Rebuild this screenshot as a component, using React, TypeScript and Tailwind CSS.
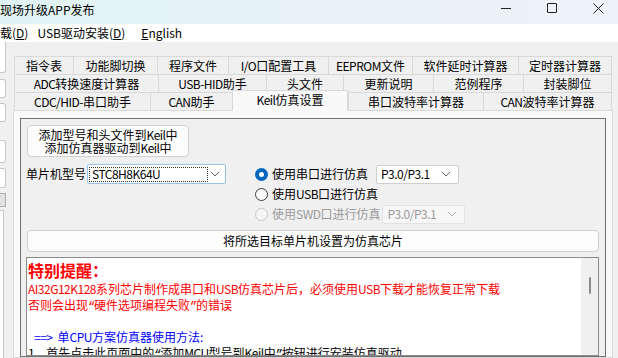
import React from 'react';

type Tab = { label: string; w: string; active?: boolean };

const tabRows: Tab[][] = [
  [
    { label: '指令表', w: 'w-[59px]' },
    { label: '功能脚切换', w: 'w-[84px]' },
    { label: '程序文件', w: 'w-[71px]' },
    { label: 'I/O口配置工具', w: 'w-[100px]' },
    { label: 'EEPROM文件', w: 'w-[84px]' },
    { label: '软件延时计算器', w: 'w-[106px]' },
    { label: '定时器计算器', w: 'w-[94px]' },
  ],
  [
    { label: 'ADC转换速度计算器', w: 'w-[144px]' },
    { label: 'USB-HID助手', w: 'w-[108px]' },
    { label: '头文件', w: 'w-[77px]' },
    { label: '更新说明', w: 'w-[90px]' },
    { label: '范例程序', w: 'w-[90px]' },
    { label: '封装脚位', w: 'w-[89px]' },
  ],
  [
    { label: 'CDC/HID-串口助手', w: 'w-[136px]' },
    { label: 'CAN助手', w: 'w-[82px]' },
    { label: 'Keil仿真设置', w: 'w-[116px]', active: true },
    { label: '串口波特率计算器', w: 'w-[135px]' },
    { label: 'CAN波特率计算器', w: 'w-[129px]' },
  ],
];

// the dialog font has half-width latin and narrow curly quotes; tighten those runs
function T({ s }: { s: string }) {
  const parts = s.split(/([\x21-\x7e]+|[“”])/).filter(Boolean);
  return (
    <>
      {parts.map((p, i) => {
        if (p === '“' || p === '”') {
          return (
            <span key={i} className="font-['Liberation_Mono',monospace] tracking-[-1.2px] leading-none">
              {p}
            </span>
          );
        }
        if (/^[\x21-\x7e]+$/.test(p)) {
          return (
            <span key={i} className="tracking-[-0.5px]">
              {p}
            </span>
          );
        }
        return <React.Fragment key={i}>{p}</React.Fragment>;
      })}
    </>
  );
}

function Chevron({ color = '#606060' }: { color?: string }) {
  return (
    <svg width="10" height="6" viewBox="0 0 10 6" fill="none">
      <path d="M1 1l4 4 4-4" stroke={color} strokeWidth="1" />
    </svg>
  );
}

function Radio({ state }: { state: 'on' | 'off' | 'disabled' }) {
  if (state === 'on') {
    return (
      <span className="w-[13px] h-[13px] rounded-full bg-[#0067c0] flex items-center justify-center shrink-0">
        <span className="w-[5px] h-[5px] rounded-full bg-white" />
      </span>
    );
  }
  if (state === 'disabled') {
    return <span className="w-[13px] h-[13px] rounded-full border border-[#c8c8c8] bg-[#f6f6f6] shrink-0" />;
  }
  return <span className="w-[13px] h-[13px] rounded-full border border-[#3a3a3a] bg-[#fbfbfb] shrink-0" />;
}

function PortCombo({ disabled }: { disabled?: boolean }) {
  return (
    <div
      className={`w-[83px] h-[19px] shrink-0 flex items-center pl-[4px] pr-[7px] rounded-[2px] border ${
        disabled ? 'border-[#e3e3e3] bg-[#f7f7f7] text-[#9a9a9a]' : 'border-[#cfcfcf] bg-white text-black'
      }`}
    >
      <span className="flex-1 leading-none">
        <T s="P3.0/P3.1" />
      </span>
      <Chevron color={disabled ? '#b0b0b0' : '#606060'} />
    </div>
  );
}

export default function App() {
  return (
    <div className="w-[618px] h-[358px] overflow-hidden bg-[#f0f0f0] font-['Noto_Sans_CJK_SC',sans-serif] text-[12px] text-black flex flex-col">
      {/* title bar */}
      <div className="h-[24px] shrink-0 flex bg-gradient-to-r from-[#e0f3f2] to-[#eef2f9]">
        <span className="pt-[2px] leading-[16px] text-[12px]">现场升级APP发布</span>
        <div className="ml-auto mr-[-3px] flex">
          <div className="w-[46px] h-[16px] flex items-center justify-center">
            <span className="w-[10px] h-px bg-[#222]" />
          </div>
          <div className="w-[46px] h-[16px] flex items-center justify-center">
            <span className="w-[10px] h-[10px] border border-[#222] rounded-[1px]" />
          </div>
          <div className="w-[46px] h-[16px] flex items-center justify-center">
            <svg width="11" height="11" viewBox="0 0 11 11">
              <path d="M0.5 0.5l10 10M10.5 0.5l-10 10" stroke="#222" strokeWidth="1" />
            </svg>
          </div>
        </div>
      </div>

      {/* menu bar */}
      <div className="h-[18px] shrink-0 bg-white flex items-center text-[12px] leading-none">
        <span>
          载(<span className="underline">D</span>)
        </span>
        <span className="ml-[9px]">
          USB驱动安装(<span className="underline">D</span>)
        </span>
        <span className="ml-[16px]">
          <span className="underline">E</span>nglish
        </span>
      </div>

      <div className="flex-1 flex min-h-0">
        {/* clipped controls on the left */}
        <div className="w-[6px] flex flex-col">
          <div className="h-[31px] border-r border-b border-[#c8c8c8] rounded-br-[3px] bg-white" />
          <div className="mt-[6px] h-[19px] border border-l-0 border-[#c8c8c8] rounded-r-[3px] bg-white" />
          <div className="mt-[5px] h-[19px] border border-l-0 border-[#c8c8c8] rounded-r-[3px] bg-white" />
          <div className="mt-[18px] h-[23px] border border-l-0 border-[#c8c8c8] rounded-r-[3px] bg-white" />
          <div className="mt-[5px] h-[20px] border border-l-0 border-[#c8c8c8] rounded-r-[3px] bg-white" />
          <div className="mt-[5px] h-[14px] border border-l-0 border-[#adadad] bg-[#e1e1e1]" />
          <div className="mt-[3px] w-[4px] flex-1 border-r border-t border-[#c8c8c8] bg-white" />
        </div>

        {/* tab control */}
        <div className="ml-[7px] w-[600px] flex flex-col pt-[14px]">
          {tabRows.map((row, ri) => (
            <div key={ri} className="h-[18px] flex items-end pl-[1px]">
              {row.map((t, i) => (
                <div
                  key={t.label}
                  className={`${t.w} flex items-center justify-center border-t border-l border-[#d9d9d9] leading-none whitespace-nowrap ${
                    i === row.length - 1 ? 'border-r' : ''
                  } ${
                    t.active
                      ? 'h-[21px] -mb-px relative z-10 bg-[#f9f9f9] border-r pb-[3px]'
                      : 'h-[18px] bg-[#f0f0f0]'
                  }`}
                >
                  <T s={t.label} />
                </div>
              ))}
            </div>
          ))}

          {/* tab page */}
          <div className="flex-1 min-h-0 border border-[#d9d9d9] bg-[#f9f9f9] pt-[7px] pl-[6px] pr-[6px] flex">
            <div className="flex-1 border border-[#6f6f6f] bg-[#f0f0f0] pt-[6px] pl-[6px] pr-[6px] flex flex-col">
              <div className="w-[162px] h-[32px] rounded-[4px] border border-[#d0d0d0] bg-[#fdfdfd] flex flex-col items-center justify-center leading-[13px] whitespace-nowrap">
                <span>
                  <T s="添加型号和头文件到Keil中" />
                </span>
                <span>
                  <T s="添加仿真器驱动到Keil中" />
                </span>
              </div>

              <div className="mt-[7px] flex items-start whitespace-nowrap">
                <div className="h-[20px] flex items-center">
                  <span className="-ml-[1px] w-[61px]">单片机型号</span>
                  <div className="w-[139px] h-[20px] rounded-[2px] border border-[#99c0e6] bg-white flex items-center pl-[1px] pr-[5px]">
                    <span className="w-[119px] h-[15px] border border-dotted border-[#333] flex items-center pl-[2px] leading-none">
                      <T s="STC8H8K64U" />
                    </span>
                    <span className="ml-auto">
                      <Chevron />
                    </span>
                  </div>
                </div>

                <div className="ml-[29px] flex flex-col">
                  <div className="h-[20px] flex items-center">
                    <Radio state="on" />
                    <span className="ml-[4px] w-[104px] shrink-0">使用串口进行仿真</span>
                    <PortCombo />
                  </div>
                  <div className="h-[20px] flex items-center">
                    <Radio state="off" />
                    <span className="ml-[4px]">
                      <T s="使用USB口进行仿真" />
                    </span>
                  </div>
                  <div className="h-[20px] flex items-center">
                    <Radio state="disabled" />
                    <span className="ml-[4px] mr-[2px] shrink-0 text-[#9a9a9a]">
                      <T s="使用SWD口进行仿真" />
                    </span>
                    <PortCombo disabled />
                  </div>
                </div>
              </div>

              <div className="mt-[6px] h-[22px] rounded-[4px] border border-[#d0d0d0] bg-[#fdfdfd] flex items-center justify-center">
                将所选目标单片机设置为仿真芯片
              </div>

              <div className="mt-[5px] -ml-px flex-1 min-h-0 border border-[#8c8c8c] bg-white flex overflow-hidden">
                <div className="flex-1 pl-px pt-[2px] whitespace-pre">
                  <div className="text-[16px] leading-[20px] font-bold text-[#ff0000]">特别提醒：</div>
                  <div className="leading-[17px] text-[#ff0000]">
                    <T s="AI32G12K128系列芯片制作成串口和USB仿真芯片后，必须使用USB下载才能恢复正常下载" />
                  </div>
                  <div className="leading-[16px] text-[#ff0000]">
                    <T s="否则会出现“硬件选项编程失败”的错误" />
                  </div>
                  <div className="h-[16px]" />
                  <div className="leading-[16px] text-[#0000ff] pl-[6px]">
                    <T s="==>" />
                    <span className="ml-[5px]">
                      <T s="单CPU方案仿真器使用方法:" />
                    </span>
                  </div>
                  <div className="leading-[16px]">
                    <T s="1、首先点击此页面中的“添加MCU型号到Keil中”按钮进行安装仿真驱动" />
                  </div>
                </div>
                <div className="w-[17px] bg-[#f0f0f0] flex justify-center pt-[19px]">
                  <span className="w-[2px] h-[17px] rounded-full bg-[#8a8a8a]" />
                </div>
              </div>
            </div>
          </div>
        </div>
      </div>
    </div>
  );
}
